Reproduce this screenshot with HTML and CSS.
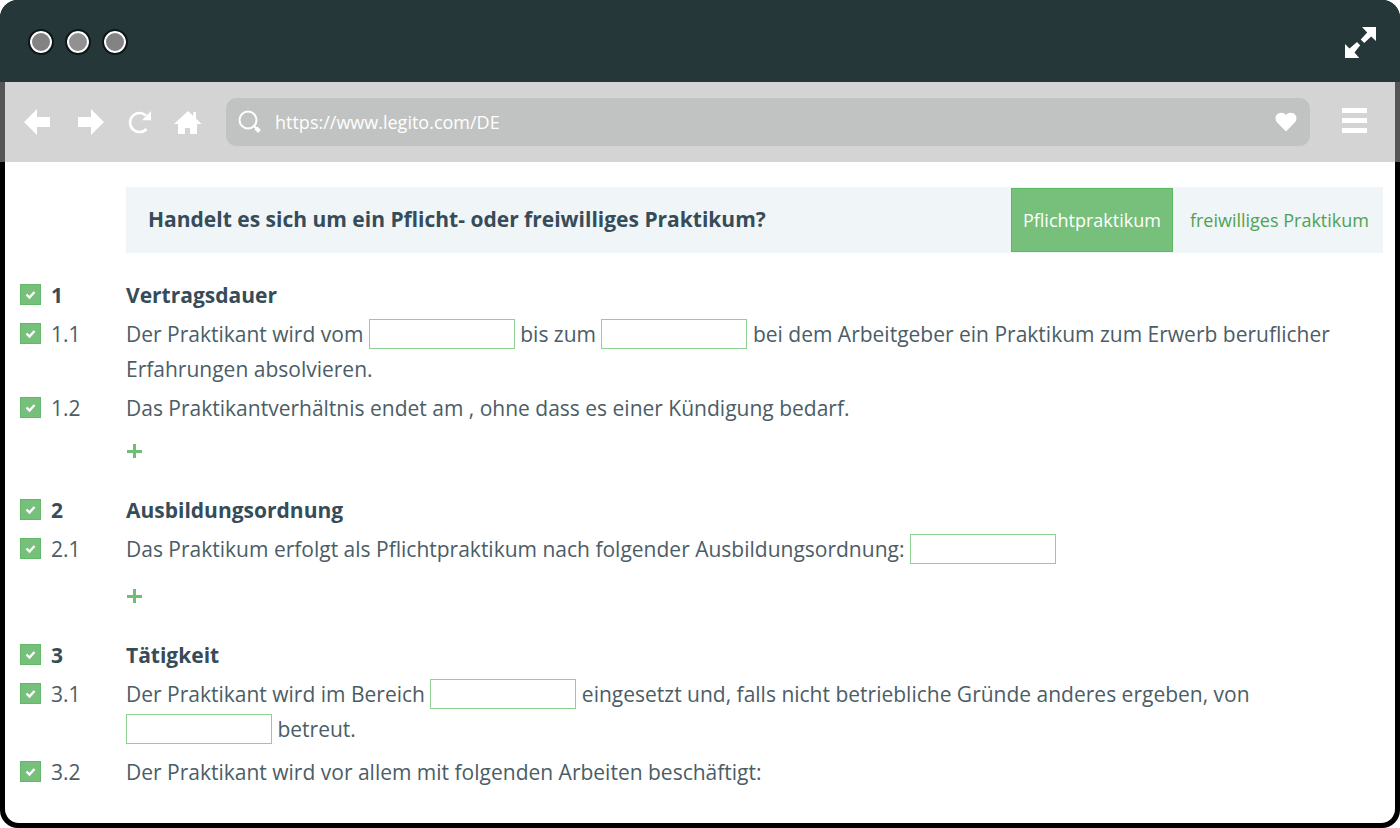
FILE: index.html
```html
<!DOCTYPE html>
<html lang="de">
<head>
<meta charset="utf-8">
<meta name="viewport" content="width=device-width, initial-scale=1">
<title>Praktikumsvertrag</title>
<link rel="stylesheet" href="styles.css">
</head>
<body>
<div class="window">
  <header class="titlebar">
    <div class="dots">
      <span class="dot"></span>
      <span class="dot dot-light"></span>
      <span class="dot"></span>
    </div>
    <button class="icon-button" type="button" aria-label="Vollbild">
      <svg width="31" height="31" viewBox="0 0 31 31" fill="#fff"><path d="M17 0h14v14l-4.800-4.500-7 6.500-3.500-3.500 6.500-7zM0 17l4.500 4.500 7.500-6.500 3.200 3.200L9.500 25.500l4.800 5.500H0z"/></svg>
    </button>
  </header>
  <nav class="toolbar">
    <div class="nav-buttons">
      <button class="icon-button" type="button" aria-label="Zurück">
        <svg width="26" height="28" viewBox="0 0 26 28" fill="#fff"><path d="M0 14 13 1v8h13v10H13v8z"/></svg>
      </button>
      <button class="icon-button" type="button" aria-label="Vorwärts">
        <svg width="26" height="28" viewBox="0 0 26 28" fill="#fff"><path d="M26 14 13 1v8H0v10h13v8z"/></svg>
      </button>
      <button class="icon-button" type="button" aria-label="Neu laden">
        <svg width="24" height="24" viewBox="0 0 24 24"><path d="M19.500 19A9.500 9.500 0 1 1 19 5.500" fill="none" stroke="#fff" stroke-width="2.600"/><path d="M24 1v9.300h-9z" fill="#fff"/></svg>
      </button>
      <button class="icon-button" type="button" aria-label="Startseite">
        <svg width="28" height="24" viewBox="0 0 28 24" fill="#fff"><path d="M14 1l5.300 5V2H22v6.500l5.500 5.500H23v10h-7v-6h-5v6H4V14H0z"/></svg>
      </button>
    </div>
    <label class="address">
      <svg width="24" height="24" viewBox="0 0 24 24" fill="none" stroke="#fff"><circle cx="10" cy="10" r="8.500" stroke-width="2"/><path d="M16 16l2.500 2.500" stroke-width="2"/><path d="M18 18l3.500 3.500" stroke-width="4"/></svg>
      <input class="address-input" type="text" value="https://www.legito.com/DE" aria-label="Adresse">
      <svg width="22" height="20" viewBox="0 0 22 20" fill="#fff"><path d="M11 19.500 2.200 10.500C-.5 7.500.2 3 3.600 1.300 6.300 0 9.200.6 11 3 12.800.6 15.700 0 18.400 1.300 21.800 3 22.500 7.500 19.800 10.500z"/></svg>
    </label>
    <button class="icon-button" type="button" aria-label="Menü">
      <svg width="25" height="28" viewBox="0 0 25 28" fill="#fff"><path d="M0 0h25v5H0zM0 10h25v5H0zM0 20h25v5H0z"/></svg>
    </button>
  </nav>
  <main class="document">
    <div class="question">
      <h1 class="question-title">Handelt es sich um ein Pflicht- oder freiwilliges Praktikum?</h1>
      <button class="option option-active" type="button">Pflichtpraktikum</button>
      <button class="option" type="button">freiwilliges Praktikum</button>
    </div>

    <section class="section">
      <div class="row">
        <input class="check" type="checkbox" id="c1" checked>
        <label class="number strong" for="c1">1</label>
        <h2 class="heading strong">Vertragsdauer</h2>
      </div>
      <div class="row">
        <input class="check" type="checkbox" id="c11" checked>
        <label class="number" for="c11">1.1</label>
        <p class="clause">Der Praktikant wird vom <input class="field" type="text" aria-label="Beginn"> bis zum <input class="field" type="text" aria-label="Ende"> bei dem Arbeitgeber ein Praktikum zum Erwerb beruflicher Erfahrungen absolvieren.</p>
      </div>
      <div class="row">
        <input class="check" type="checkbox" id="c12" checked>
        <label class="number" for="c12">1.2</label>
        <p class="clause">Das Praktikantverhältnis endet am , ohne dass es einer Kündigung bedarf.</p>
      </div>
      <button class="add" type="button" aria-label="Absatz hinzufügen"><svg width="17" height="16" viewBox="0 0 17 16" fill="#6fbe74"><path d="M7 1h3v6h6v3h-6v5H7v-5H1V7h6z"/></svg></button>
    </section>

    <section class="section">
      <div class="row">
        <input class="check" type="checkbox" id="c2" checked>
        <label class="number strong" for="c2">2</label>
        <h2 class="heading strong">Ausbildungsordnung</h2>
      </div>
      <div class="row row-field-end">
        <input class="check" type="checkbox" id="c21" checked>
        <label class="number" for="c21">2.1</label>
        <p class="clause">Das Praktikum erfolgt als Pflichtpraktikum nach folgender Ausbildungsordnung: <input class="field" type="text" aria-label="Ausbildungsordnung"></p>
      </div>
      <button class="add" type="button" aria-label="Absatz hinzufügen"><svg width="17" height="16" viewBox="0 0 17 16" fill="#6fbe74"><path d="M7 1h3v6h6v3h-6v5H7v-5H1V7h6z"/></svg></button>
    </section>

    <section class="section">
      <div class="row">
        <input class="check" type="checkbox" id="c3" checked>
        <label class="number strong" for="c3">3</label>
        <h2 class="heading strong">Tätigkeit</h2>
      </div>
      <div class="row row-field-end">
        <input class="check" type="checkbox" id="c31" checked>
        <label class="number" for="c31">3.1</label>
        <p class="clause">Der Praktikant wird im Bereich <input class="field" type="text" aria-label="Bereich"> eingesetzt und, falls nicht betriebliche Gründe anderes ergeben, von <input class="field" type="text" aria-label="Betreuer"> betreut.</p>
      </div>
      <div class="row">
        <input class="check" type="checkbox" id="c32" checked>
        <label class="number" for="c32">3.2</label>
        <p class="clause">Der Praktikant wird vor allem mit folgenden Arbeiten beschäftigt:</p>
      </div>
    </section>
  </main>
</div>
</body>
</html>
```
FILE: styles.css
```css
* {
  box-sizing: border-box;
}

body {
  margin: 0;
  background: #fff;
  color: #4b5d66;
  font-family: "Open Sans", "Noto Sans", sans-serif;
  font-size: 21px;
  line-height: 35px;
}

button,
input {
  font: inherit;
}

.window {
  display: flex;
  flex-direction: column;
  min-height: 100vh;
  border-radius: 18px;
  overflow: hidden;
  background: #000;
}

.titlebar {
  display: flex;
  align-items: center;
  justify-content: space-between;
  height: 82px;
  padding: 2px 24px 0 28px;
  background: #253739;
}

.dots {
  display: flex;
  gap: 11px;
}

.dot {
  width: 26px;
  height: 26px;
  border: 2px solid #0d1719;
  border-radius: 50%;
  background: #838383;
  box-shadow: inset 0 0 0 2px #fff;
}

.dot-light {
  background: #919191;
}

.icon-button {
  display: flex;
  padding: 0;
  border: 0;
  background: none;
}

.toolbar {
  display: flex;
  align-items: center;
  height: 80px;
  padding: 0 28px 0 19px;
  border: solid #555;
  border-width: 0 5px;
  background: #d4d4d4;
}

.nav-buttons {
  display: flex;
  align-items: center;
  gap: 23px;
  margin-right: 24px;
}

.nav-buttons .icon-button:first-child {
  margin-right: 5px;
}

.address {
  display: flex;
  flex: 1;
  align-items: center;
  height: 48px;
  margin-right: 32px;
  padding: 0 13px 0 12px;
  border-radius: 10px;
  background: #c1c3c2;
}

.address-input {
  flex: 1;
  min-width: 0;
  padding: 0 13px;
  border: 0;
  outline: 0;
  background: none;
  color: #fff;
  font-size: 18px;
}

.document {
  flex: 1;
  margin: 0 5px 5px;
  padding: 25px 12px 32px 15px;
  border-radius: 0 0 14px 14px;
  background: #fff;
}

.question {
  display: flex;
  align-items: center;
  margin: 0 0 25px 106px;
  padding: 1px 0;
  background: #f0f5f8;
}

.question-title {
  flex: 1;
  margin: 0;
  padding: 0 0 2px 22px;
  color: #364c58;
  font-size: 21px;
  font-weight: 700;
}

.option {
  height: 64px;
  padding: 0 14px 0 17px;
  border: 0;
  background: none;
  color: #4fa255;
  font-size: 18px;
}

.option-active {
  padding: 0 11px;
  border: 1px solid #5cb860;
  background: #76c07b;
  color: #fff;
}

.section {
  display: flex;
  flex-direction: column;
  align-items: stretch;
  gap: 4px;
  margin-bottom: 21px;
}

.section:last-child {
  margin-bottom: 0;
}

.row {
  display: grid;
  grid-template-columns: 21px 65px 1fr;
  column-gap: 10px;
  align-items: start;
}

.row-field-end {
  padding-bottom: 4px;
}

.check {
  width: 21px;
  height: 21px;
  margin: 6px 0 0;
  appearance: none;
  border: 1px solid #62b967;
  background: #76c07b;
}

.check:checked {
  background-image: url("data:image/svg+xml,%3Csvg xmlns='http://www.w3.org/2000/svg' viewBox='0 0 19 19'%3E%3Cpath d='M5.500 9.500l3 3 5-5.500' fill='none' stroke='%23fff' stroke-width='2.400'/%3E%3C/svg%3E");
}

.heading,
.clause {
  margin: 0;
  font-size: 21px;
}

.strong {
  color: #364c58;
  font-weight: 700;
}

.field {
  width: 146px;
  height: 30px;
  margin: 0 0 3px;
  padding: 0 6px;
  border: 1px solid #8fd093;
  background: #fff;
  line-height: 28px;
  vertical-align: bottom;
}

.add {
  display: flex;
  align-items: center;
  align-self: flex-start;
  height: 42px;
  margin-left: 106px;
  padding: 0;
  border: 0;
  background: none;
}
```
